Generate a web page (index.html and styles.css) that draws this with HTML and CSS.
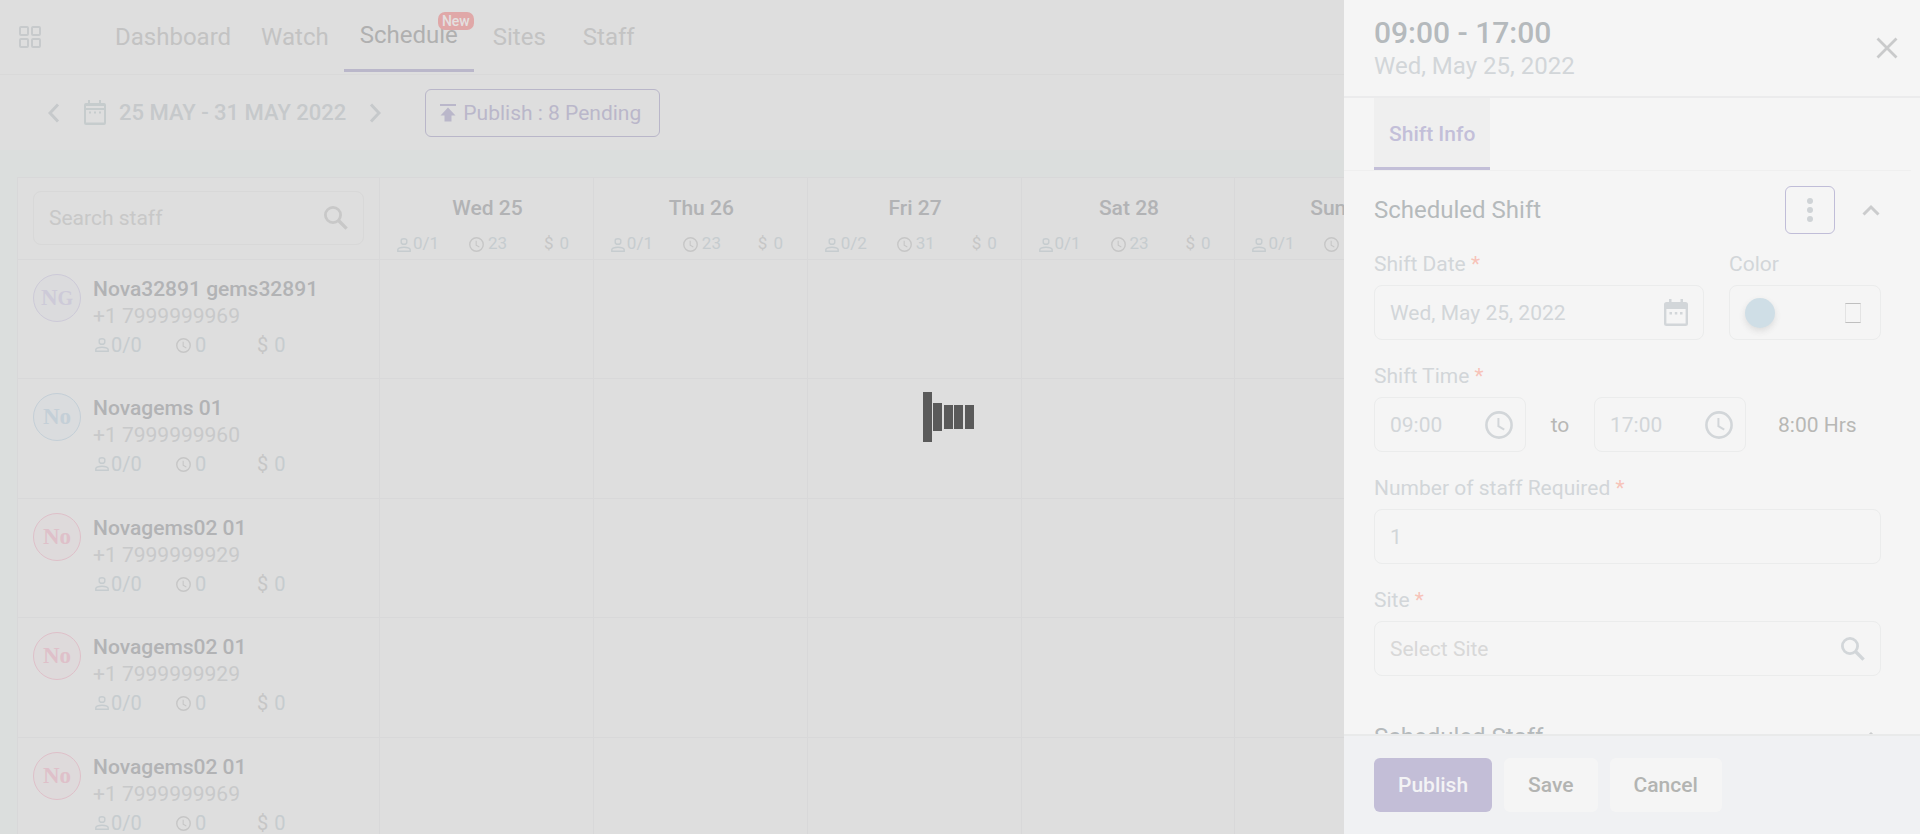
FILE: index.html
```html
<!DOCTYPE html>
<html lang="en">
<head>
<meta charset="utf-8">
<title>Schedule</title>
<link rel="stylesheet" href="styles.css">
</head>
<body>
<svg class="sprite" aria-hidden="true">
  <symbol id="i-person" viewBox="0 0 14 14"><path d="M4.2 2.6Q4.2.7 7 .7T9.800 2.600V4.200Q9.800 6.300 7 6.300T4.200 4.200ZM.8 13.200V11.500Q1.600 9.200 7 9.200T13.200 11.500V13.200Z" fill="none" stroke="currentColor" stroke-width="1.400"/></symbol>
  <symbol id="i-clock" viewBox="0 0 24 24"><circle cx="12" cy="12" r="10.800" fill="none" stroke="currentColor" stroke-width="2.200"/><path d="M11.500 6V13L16.500 16" fill="none" stroke="currentColor" stroke-width="1.700"/></symbol>
  <symbol id="i-search" viewBox="0 0 24 24"><circle cx="9" cy="9" r="7.600" fill="none" stroke="currentColor" stroke-width="2.800"/><path d="M14.500 14.500L22.600 22.600" stroke="currentColor" stroke-width="3.400"/></symbol>
  <symbol id="i-calendar" viewBox="0 0 24 28"><path d="M5 0h2.500v3h9V0H19v3h2.500Q24 3 24 5.500v19Q24 27 21.500 27h-19Q0 27 0 24.500v-19Q0 3 2.500 3H5ZM2.400 10v14.600h19.200V10ZM5.500 13H8v2.500H5.500Zm5.300 0h2.500v2.500h-2.500Zm5.200 0h2.500v2.500H16Z" fill="currentColor" fill-rule="evenodd"/></symbol>
  <symbol id="i-up" viewBox="0 0 18 12"><path d="M1.500 10.500L9 3L16.500 10.500" fill="none" stroke="currentColor" stroke-width="3"/></symbol>
</svg>

<div class="app">
  <header class="topbar">
    <button class="icon-btn apps" aria-label="Apps">
      <svg width="22" height="22" viewBox="0 0 22 22" fill="none" stroke="currentColor" stroke-width="2"><rect x="1" y="1" width="8" height="8" rx="1"/><rect x="13" y="1" width="8" height="8" rx="1"/><rect x="1" y="13" width="8" height="8" rx="1"/><rect x="13" y="13" width="8" height="8" rx="1"/></svg>
    </button>
    <nav class="nav">
      <a href="#">Dashboard</a>
      <a href="#">Watch</a>
      <a href="#" class="active">Schedule<span class="badge">New</span></a>
      <a href="#">Sites</a>
      <a href="#">Staff</a>
    </nav>
  </header>

  <div class="toolbar">
    <button class="icon-btn" aria-label="Previous week"><svg width="12" height="20" viewBox="0 0 12 20"><path d="M10 1.500L2 10L10 18.500" fill="none" stroke="currentColor" stroke-width="3"/></svg></button>
    <button class="range">
      <svg width="24" height="26" viewBox="0 0 24 26"><path d="M5 0h2v3h9V0h2v3h3q2 0 2 2v18q0 2-2 2H3q-2 0-2-2V5q0-2 2-2h2ZM3 6v2h18V6ZM3 10v12.500h18V10ZM6 11.500h2v2H6Zm5 0h2v2h-2Zm5 0h2v2h-2Z" fill="currentColor" fill-rule="evenodd"/></svg>
      <span>25 MAY - 31 MAY 2022</span>
    </button>
    <button class="icon-btn" aria-label="Next week"><svg width="12" height="20" viewBox="0 0 12 20"><path d="M2 1.500L10 10L2 18.500" fill="none" stroke="currentColor" stroke-width="3"/></svg></button>
    <button class="pending">
      <svg width="16" height="18" viewBox="0 0 16 18"><path d="M0 0h16v2H0ZM8 3.500L15.500 11.500H11.500V17.500H4.500V11.500H.5Z" fill="currentColor"/></svg>
      Publish : 8 Pending
    </button>
  </div>

  <main class="board">
    <table class="grid">
      <thead>
        <tr id="head">
          <th class="staff-col">
            <label class="search"><input type="search" placeholder="Search staff" aria-label="Search staff"><svg width="24" height="24"><use href="#i-search"/></svg></label>
          </th>
        </tr>
      </thead>
      <tbody id="rows"></tbody>
    </table>
  </main>
</div>

<aside class="drawer" role="dialog" aria-labelledby="drawer-title">
  <header class="drawer-head">
    <div>
      <h1 id="drawer-title">09:00 - 17:00</h1>
      <p>Wed, May 25, 2022</p>
    </div>
    <button class="icon-btn close" aria-label="Close"><svg width="22" height="22" viewBox="0 0 22 22"><path d="M1.500 1.500L20.500 20.500M20.500 1.500L1.500 20.500" stroke="currentColor" stroke-width="2.800"/></svg></button>
  </header>
  <div class="tabs" role="tablist"><button class="tab" role="tab" aria-selected="true">Shift Info</button></div>

  <form class="drawer-body" id="shift">
    <div class="section">
      <h2>Scheduled Shift</h2>
      <button type="button" class="kebab" aria-label="More"><svg width="6" height="24" viewBox="0 0 6 24" fill="currentColor"><circle cx="3" cy="3" r="3"/><circle cx="3" cy="12" r="3"/><circle cx="3" cy="21" r="3"/></svg></button>
      <button type="button" class="icon-btn fold" aria-label="Collapse"><svg width="18" height="12"><use href="#i-up"/></svg></button>
    </div>
    <div class="line">
      <div class="field grow">
        <label for="date">Shift Date <b>*</b></label>
        <div class="box"><input id="date" value="Wed, May 25, 2022"><svg width="24" height="28"><use href="#i-calendar"/></svg></div>
      </div>
      <div class="field short">
        <label for="color">Color</label>
        <button type="button" id="color" class="box color"><span class="dot"></span><span class="glyph"></span></button>
      </div>
    </div>
    <div class="field">
      <label for="from">Shift Time <b>*</b></label>
      <div class="times">
        <div class="box short"><input id="from" value="09:00"><svg width="28" height="28"><use href="#i-clock"/></svg></div>
        <span class="to">to</span>
        <div class="box short"><input id="until" aria-label="Shift end" value="17:00"><svg width="28" height="28"><use href="#i-clock"/></svg></div>
        <span class="hours">8:00 Hrs</span>
      </div>
    </div>
    <div class="field">
      <label for="count">Number of staff Required <b>*</b></label>
      <div class="box"><input id="count" value="1"></div>
    </div>
    <div class="field">
      <label for="site">Site <b>*</b></label>
      <div class="box"><input id="site" placeholder="Select Site"><svg width="24" height="24"><use href="#i-search"/></svg></div>
    </div>
    <div class="section next">
      <h2>Scheduled Staff</h2>
      <button type="button" class="icon-btn fold" aria-label="Collapse"><svg width="18" height="12"><use href="#i-up"/></svg></button>
    </div>
  </form>

  <footer class="drawer-foot">
    <button form="shift" class="btn primary">Publish</button>
    <button form="shift" class="btn">Save</button>
    <button type="button" class="btn">Cancel</button>
  </footer>
</aside>

<div class="loader" role="status" aria-label="Loading">
  <svg width="74" height="50" viewBox="0 0 74 50" fill="currentColor"><path d="M0 0h9v50H0ZM10 11h9v28h-9ZM21 13h9v24h-9ZM31 13h9v24h-9ZM42 13h9v24h-9Z"/></svg>
</div>
<script src="app.js"></script>
</body>
</html>
```

FILE: app.js
```js
const days = [
  ['Wed 25', '0/1', '23'], ['Thu 26', '0/1', '23'], ['Fri 27', '0/2', '31'],
  ['Sat 28', '0/1', '23'], ['Sun 29', '0/1', '23'], ['Mon 30', '0/1', '23'], ['Tue 31', '0/1', '23']
];
const staff = [
  ['N<small>G</small>', 'violet', 'Nova32891 gems32891', '+1 7999999969'],
  ['No', 'blue', 'Novagems 01', '+1 7999999960'],
  ['No', 'pink', 'Novagems02 01', '+1 7999999929'],
  ['No', 'pink', 'Novagems02 01', '+1 7999999929'],
  ['No', 'pink', 'Novagems02 01', '+1 7999999969']
];
const stats = (people, hours) => `
  <div class="stats">
    <span><svg width="14" height="14"><use href="#i-person"/></svg>${people}</span>
    <span><svg width="15" height="15"><use href="#i-clock"/></svg>${hours}</span>
    <span><i>$</i>0</span>
  </div>`;

document.getElementById('head').insertAdjacentHTML('beforeend', days.map(([name, people, hours]) =>
  `<th class="day"><div class="day-name">${name}</div>${stats(people, hours)}</th>`).join(''));

document.getElementById('rows').innerHTML = staff.map(([initials, tone, name, phone]) => `
  <tr>
    <td class="staff-col">
      <div class="person">
        <span class="avatar ${tone}"><span>${initials}</span></span>
        <div class="info">
          <div class="name">${name}</div>
          <div class="phone">${phone}</div>
          ${stats('0/0', '0')}
        </div>
      </div>
    </td>
    ${'<td></td>'.repeat(days.length)}
  </tr>`).join('');
```

FILE: styles.css
```css
* { box-sizing: border-box; }
body {
  margin: 0;
  height: 100vh;
  overflow: hidden;
  font-family: Roboto, "Liberation Sans", sans-serif;
  font-size: 21px;
  line-height: 24px;
  background: #dbdedd;
  color: #b2b3b5;
}
h1, h2, p { margin: 0; font-weight: 400; }
button, input { font: inherit; color: inherit; }
button { padding: 0; border: 0; background: none; display: flex; align-items: center; justify-content: center; }
input { min-width: 0; padding: 0; border: 0; outline: 0; background: none; }
input::placeholder { color: inherit; opacity: 1; }
svg { display: block; flex: none; }
.sprite { position: absolute; width: 0; height: 0; }

.app { height: 100vh; overflow: hidden; }
.topbar { display: flex; height: 75px; padding-left: 19px; background: #dedede; border-bottom: 1px solid #d9d9d9; }
.apps { width: 22px; color: #c7cacc; }
.nav { display: flex; margin-left: 59px; font-size: 24px; line-height: 28px; }
.nav a { position: relative; padding: 23px 15px; color: #c3c3c3; text-decoration: none; }
.nav a:last-child { margin-left: 7px; }
.nav .active { height: 72px; margin-right: 4px; padding: 21px 16px; color: #b0b0b0; border-bottom: 3px solid #bab7ca; }
.badge { position: absolute; top: 12px; right: 0; padding: 0 4px; border-radius: 7px; background: #e0a8a8; color: #e4e0e0; font-size: 14px; font-weight: 500; line-height: 18px; }

.toolbar { display: flex; align-items: center; height: 75px; padding-left: 48px; background: #dedede; color: #c6c9cb; }
.range { gap: 12px; margin: 0 23px; font-size: 22px; font-weight: 500; }
.range svg { color: #c6cccd; }
.pending { gap: 7px; height: 48px; margin-left: 44px; padding: 0 18px 0 14px; border: 1px solid #b9b6c9; border-radius: 6px; color: #bab7ca; }

.board { padding: 27px 43px 0 17px; }
.grid { width: 100%; table-layout: fixed; border-collapse: collapse; background: #dedede; }
.grid th, .grid td { padding: 0; border: 1px solid #d8d8d9; vertical-align: top; text-align: left; font-weight: 400; }
.grid tr { height: 119px; }
.grid tr:nth-child(even) { height: 120px; }
.grid thead tr { height: 82px; }
.grid .staff-col { width: 362px; padding: 14px 15px 0; }
.grid th.staff-col { padding-top: 13px; }
.search { display: flex; align-items: center; height: 54px; padding: 0 15px; border: 1px solid #d8d8d8; border-radius: 8px; color: #c8c8c8; }
.search input { flex: 1; }
.search input, .box input { appearance: none; }
.day-name { padding: 18px 0 0 2px; font-weight: 500; text-align: center; }
.stats { display: grid; align-items: center; color: #c6cccf; }
.stats span { display: flex; align-items: center; gap: 4px; }
.stats span:first-child { gap: 2px; }
.stats span:last-child { gap: 6px; }
.stats i { font-style: normal; color: #c6c6c6; }
.stats span:nth-child(2) svg { color: #c6c6c6; }
.day .stats { grid-template-columns: 72px 75px auto; margin-top: 13px; padding-left: 17px; font-size: 17px; line-height: 20px; }
.day .stats svg { margin-top: 3px; }
.person { display: flex; gap: 12px; }
.avatar { display: flex; align-items: center; justify-content: center; width: 48px; height: 48px; border: 1px solid; border-radius: 50%; font: bold 23px "Liberation Serif", serif; }
.avatar small { font-size: 20px; }
.violet { color: #cdcad8; background: #dbdbdd; }
.blue { color: #c4cfd7; background: #dadcde; }
.pink { color: #dec0c9; background: #dedadb; }
.info { padding-top: 2px; }
.name { font-weight: 500; line-height: 26px; }
.phone { color: #c8c9ca; line-height: 28px; }
.info .stats { grid-template-columns: 81px 81px auto; margin-top: 1px; padding-left: 2px; font-size: 20px; line-height: 28px; }

.drawer { position: fixed; inset: 0 0 0 auto; width: 30%; display: flex; flex-direction: column; background: #f5f5f5; color: #d2d6d9; }
.drawer-head { display: flex; align-items: center; justify-content: space-between; height: 98px; padding: 0 22px 0 30px; border-bottom: 2px solid #ebebec; }
.drawer-head h1 { font-size: 30px; line-height: 36px; font-weight: 500; color: #b5babd; }
.drawer-head p { font-size: 24px; line-height: 30px; }
.close { color: #c9cacb; }
.tabs { display: flex; height: 73px; margin-right: 9px; padding-left: 30px; border-bottom: 1px solid #efefef; }
.tab { padding: 13px 15px 10px; background: #efefef; color: #c3bfd9; border-bottom: 3px solid #c3bfd8; font-weight: 500; }
.drawer-body { flex: 1; min-height: 0; overflow: hidden; display: flex; flex-direction: column; gap: 24px; padding: 15px 39px 0 30px; }
.section { display: flex; align-items: center; height: 48px; margin-bottom: -6px; flex: none; }
.section h2 { flex: 1; font-size: 24px; line-height: 28px; color: #b5babc; }
.section.next { margin-top: 13px; }
.kebab { width: 50px; height: 48px; border: 1px solid #c0bdd8; border-radius: 6px; color: #cfd3d6; }
.fold { margin: 0 1px 0 27px; color: #cbcccd; }
.line { display: flex; gap: 25px; }
.grow { flex: 1; min-width: 0; }
.field { display: flex; flex-direction: column; gap: 9px; flex: none; }
.field.grow { flex: 1; }
.field label b { font-weight: 400; color: #f7c3b9; }
.box { display: flex; align-items: center; justify-content: space-between; height: 55px; padding: 0 15px; border: 1px solid #ebecec; border-radius: 8px; }
.box input { flex: 1; }
.short { width: 152px; }
.box.short { padding-right: 12px; }
.dot { width: 30px; height: 30px; border-radius: 50%; background: #cfdee6; box-shadow: 0 3px 6px #dcdcdc; }
.color { width: 100%; }
.glyph { width: 16px; height: 20px; margin-right: 4px; border: 1px solid #e3e3e3; border-block-color: #bfbfbf; }
.times { display: flex; align-items: center; color: #d2d6d9; }
.to { width: 68px; text-align: center; color: #b8b8b5; }
.hours { margin-left: 32px; color: #b8b8b5; }
#site { color: #d8d8d8; }
.drawer-foot { display: flex; gap: 12px; height: 100px; padding: 22px 30px 0; border-top: 2px solid #e9eaea; background: #f0f1f3; }
.btn { height: 54px; padding: 0 24px; border-radius: 6px; background: #f5f5f5; color: #b3b4b2; font-weight: 500; }
.primary { background: #c3bed7; color: #f3f3f5; }

.loader { position: fixed; inset: 0; display: flex; align-items: center; justify-content: center; color: #5a5a5a; pointer-events: none; }
```
